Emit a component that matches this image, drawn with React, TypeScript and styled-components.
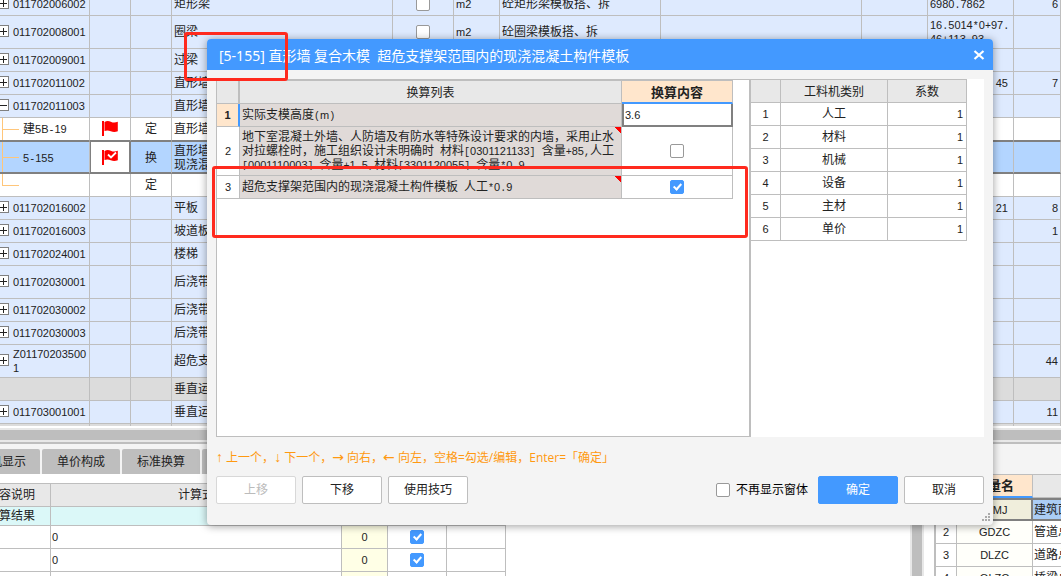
import React from 'react';
import styled, { createGlobalStyle, css } from 'styled-components';

const line = '#bebebe';
const frame = '#808080';
const blue = '#4399ff';
const gridFont = '"Noto Sans CJK SC", sans-serif';
const uiFont = '"Open Sans", "Liberation Sans", "Noto Sans CJK SC", sans-serif';

const GlobalStyle = createGlobalStyle`
  *, *::before, *::after { box-sizing: border-box; }
  html, body { margin: 0; padding: 0; overflow: hidden; background: #fff; }
  body { font-family: ${gridFont}; font-size: 12px; line-height: 14px; color: #222; }
  table { border-collapse: separate; border-spacing: 0; table-layout: fixed; }
  td, th { padding: 0 0 2px; font-weight: normal; }
  button, input { font: inherit; color: inherit; margin: 0; }
`;

/* ---------- text ---------- */

const Alnum = styled.span`
  font-family: 'Liberation Sans', sans-serif;
  font-size: 11px;
  line-height: 0;
`;

const Punct = styled.span`
  font-family: 'Liberation Mono', monospace;
  font-size: 10px;
  line-height: 0;
`;

/* Chinese stays in the grid font; Latin runs and half-width signs get narrow faces. */
function Mixed({ children }: { children: string }) {
  const parts = children.match(/\n|[A-Za-z0-9]+|[ -/:-@[-`{-~]+|[^ -~\n]+/g) ?? [];
  return (
    <>
      {parts.map((p, i) =>
        /^[A-Za-z0-9]/.test(p) ? <Alnum key={i}>{p}</Alnum> : /^[ -~]/.test(p) ? <Punct key={i}>{p}</Punct> : p,
      )}
    </>
  );
}

/* ---------- shared controls ---------- */

const Check = styled.input.attrs({ type: 'checkbox' })`
  appearance: none;
  display: block;
  position: relative;
  flex: none;
  width: 14px;
  height: 14px;
  margin: 0 auto;
  border: 1px solid #999;
  border-radius: 2px;
  background: #fff;
  td > & {
    margin-top: 2px;
  }
  &:checked {
    border-color: ${blue};
    background: ${blue};
  }
  &:checked::after {
    content: '';
    position: absolute;
    left: 4px;
    top: 1px;
    width: 5px;
    height: 8px;
    border: solid #fff;
    border-width: 0 2px 2px 0;
    transform: rotate(42deg);
  }
`;

/* ---------- bill of quantities ---------- */

const Page = styled.main`
  display: flex;
  flex-direction: column;
  height: 100vh;
  overflow: hidden;
`;

const BillPane = styled.section`
  flex: none;
  overflow: hidden;
`;

const BillTable = styled.table`
  width: 100%;
  margin-top: -7px;
`;

type Tone = 'item' | 'plain' | 'group' | 'selected';
const tones: Record<Tone, string> = { item: '#deeafe', plain: '#fff', group: '#dcdcdc', selected: '#b3d5ff' };

const BillRow = styled.tr<{ $tone: Tone; $tall?: boolean; $beforeSelected?: boolean }>`
  height: ${(p) => (p.$tall ? 33 : 23)}px;
  background: ${(p) => tones[p.$tone]};
  & > td {
    border-bottom: 1px solid ${(p) => (p.$beforeSelected ? frame : line)};
  }
  ${(p) =>
    p.$tone === 'selected' &&
    css`
      & > td {
        padding-bottom: 0;
        border-top: 1px solid ${frame};
        border-bottom: 2px solid ${frame};
      }
    `}
`;

const EdgeRow = styled.tr`
  height: 2px;
  background: #dcdcdc;
  & > td {
    padding: 0;
  }
`;

const BillCell = styled.td<{ $align?: string }>`
  padding: 0 2px 2px;
  border-right: 1px solid ${line};
  text-align: ${(p) => p.$align ?? 'left'};
  white-space: pre-wrap;
  word-break: break-all;
`;

const AmountCell = styled(BillCell)`
  padding: 0 ${(p) => (p.$align === 'right' ? 5 : 2)}px 2px 2px;
`;

const FlagCell = styled(BillCell)<{ $active?: boolean }>`
  text-align: center;
  ${(p) =>
    p.$active &&
    css`
      background: #fff;
      border-right: 2px solid ${frame};
      box-shadow: inset 1px 0 ${frame};
    `}
`;

const CodeCell = styled(BillCell)<{ $branch?: 'mid' | 'last' }>`
  padding: 0 0 2px;
  ${(p) =>
    p.$branch &&
    css`
      background-image: linear-gradient(#ffc67a, #ffc67a), linear-gradient(#ffc67a, #ffc67a);
      background-repeat: no-repeat;
      background-position: 2px 0, 2px 50%;
      background-size: 1px ${p.$branch === 'last' ? '50%' : '100%'}, 17px 1px;
    `}
`;

const CodeBox = styled.div<{ $child?: boolean }>`
  display: flex;
  align-items: center;
  gap: 4px;
  padding-left: ${(p) => (p.$child ? 23 : 0)}px;
`;

const Expander = styled.button`
  flex: none;
  display: grid;
  place-items: center;
  width: 12px;
  height: 12px;
  margin-left: -3px;
  padding: 0;
  border: 1px solid #808080;
  background: #fff;
`;

interface Item {
  code: string;
  kind?: string;
  name: string;
  tone?: Tone;
  tall?: boolean;
  open?: boolean;
  child?: 'mid' | 'last';
  flag?: 'plain' | 'checked';
  check?: boolean;
  unit?: string;
  work?: string;
  expr?: string;
  qty?: string;
  sum?: string;
}

const items: Item[] = [
  { code: '011702006002', name: '矩形梁', check: true, unit: 'm2', work: '砼矩形梁模板搭、拆', expr: '6980.7862', sum: '6' },
  { code: '011702008001', name: '圈梁', tall: true, check: true, unit: 'm2', work: '砼圈梁模板搭、拆', expr: '16.5014*0+97.\n46+113.93' },
  { code: '011702009001', name: '过梁' },
  { code: '011702011002', name: '直形墙', qty: '45', sum: '7' },
  { code: '011702011003', name: '直形墙', open: true },
  { code: '建5B-19', kind: '定', name: '直形墙', tone: 'plain', child: 'mid', flag: 'plain' },
  {
    code: '5-155',
    kind: '换',
    name: '直形墙 复合木模 超危支撑架\n现浇混凝土构件模板',
    tone: 'selected',
    tall: true,
    child: 'mid',
    flag: 'checked',
  },
  { code: '', kind: '定', name: '', tone: 'plain', child: 'last' },
  { code: '011702016002', name: '平板', qty: '21', sum: '8' },
  { code: '011702016003', name: '坡道板', sum: '1' },
  { code: '011702024001', name: '楼梯' },
  { code: '011702030001', name: '后浇带', tall: true },
  { code: '011702030002', name: '后浇带' },
  { code: '011702030003', name: '后浇带' },
  { code: 'Z011702035001', name: '超危支撑架', tall: true, sum: '44' },
  { code: '', name: '垂直运输', tone: 'group' },
  { code: '011703001001', name: '垂直运输', sum: '11' },
];

const FlagIcon = styled.svg`
  display: block;
  margin: 0 auto;
`;

function Flag({ checked }: { checked?: boolean }) {
  return (
    <FlagIcon width="16" height="17" viewBox="0 0 16 17" aria-hidden="true">
      <path d="M0 1h2v15H0z" fill="#f00" />
      <path d="M2.500 2q3-2 6.300-.3t7 .1v9.400q-3.700 1.500-7 0T2.500 11z" fill="#f00" />
      {checked && <path d="M6 5.500l3 3 5-5" fill="none" stroke="#fff" strokeWidth="1.800" />}
    </FlagIcon>
  );
}

function Bill() {
  return (
    <BillPane>
      <BillTable>
        <colgroup>
          {[90, 41, 41, 221, 61, 46, 161, 201, 66, 86].map((w, i) => (
            <col key={i} width={w} />
          ))}
          <col />
        </colgroup>
        <tbody>
          {items.map((it, i) => (
            <BillRow key={i} $tone={it.tone ?? 'item'} $tall={it.tall} $beforeSelected={items[i + 1]?.tone === 'selected'}>
              <CodeCell $branch={it.child}>
                <CodeBox $child={!!it.child}>
                  {!it.child && it.tone !== 'group' && (
                    <Expander aria-label={it.open ? '收起' : '展开'}>
                      <svg width="10" height="10" viewBox="0 0 10 10" stroke="#222" fill="none">
                        <path d={it.open ? 'M2 5.500h7' : 'M2 5.500h7M5.500 2v7'} />
                      </svg>
                    </Expander>
                  )}
                  <span>
                    <Mixed>{it.code}</Mixed>
                  </span>
                </CodeBox>
              </CodeCell>
              <FlagCell $active={it.tone === 'selected'}>{it.flag && <Flag checked={it.flag === 'checked'} />}</FlagCell>
              <BillCell $align="center">{it.kind}</BillCell>
              <BillCell>
                <Mixed>{it.name}</Mixed>
              </BillCell>
              <BillCell>{it.check && <Check aria-label={it.name} />}</BillCell>
              <BillCell>
                <Mixed>{it.unit ?? ''}</Mixed>
              </BillCell>
              <BillCell>{it.work}</BillCell>
              <BillCell />
              <BillCell />
              <AmountCell $align={it.expr ? 'left' : 'right'}>
                <Mixed>{it.expr ?? it.qty ?? ''}</Mixed>
              </AmountCell>
              <BillCell $align="right">
                <Mixed>{it.sum ?? ''}</Mixed>
              </BillCell>
            </BillRow>
          ))}
          <EdgeRow>
            {Array.from({ length: 11 }, (_, i) => (
              <BillCell key={i} />
            ))}
          </EdgeRow>
        </tbody>
      </BillTable>
    </BillPane>
  );
}

const ScrollTrack = styled.div`
  flex: none;
  height: 14px;
  margin-top: 2px;
  border: solid #e8e8e8;
  border-width: 2px 0;
  background: ${line};
`;

/* ---------- lower panes ---------- */

const TabBar = styled.div`
  flex: none;
  display: flex;
  gap: 2px;
  padding-top: 5px;
  border-top: 2px solid ${line};
  background: #f4f4f4;
`;

const Tab = styled.button<{ $cut?: boolean }>`
  flex: none;
  width: ${(p) => (p.$cut ? 88 : 78)}px;
  height: 25px;
  margin-left: ${(p) => (p.$cut ? -48 : 0)}px;
  padding: 0;
  border: 0;
  border-radius: 2px 2px 0 0;
  background: ${line};
  font-family: ${uiFont};
`;

const Lower = styled.div`
  flex: 1;
  display: flex;
  min-height: 0;
  overflow: hidden;
`;

const FormulaPane = styled.section`
  flex: 1;
  padding-top: 9px;
  overflow: hidden;
`;

const FormulaTable = styled.table`
  width: 534px;
  margin-left: -28px;
  border-top: 1px solid ${line};
`;

const FormulaRow = styled.tr<{ $kind?: 'head' | 'total' }>`
  height: ${(p) => (p.$kind === 'total' ? 19 : 23)}px;
  background: ${(p) => (p.$kind === 'head' ? '#e8e8e8' : p.$kind === 'total' ? '#dbf8f8' : '#fff')};
`;

const FormulaCell = styled.td<{ $align?: string; $tint?: boolean }>`
  padding: 0 1px 2px;
  border: solid ${line};
  border-width: 0 1px 1px 0;
  text-align: ${(p) => p.$align ?? 'left'};
  background: ${(p) => (p.$tint ? '#ffffe6' : 'transparent')};
`;

const Splitter = styled.div`
  flex: none;
  width: 14px;
  border: solid #e8e8e8;
  border-width: 0 2px;
  background: ${line};
`;

const VariablePane = styled.section`
  flex: none;
  width: 127px;
  margin-left: 10px;
  border-left: 2px solid ${line};
  overflow: hidden;
`;

const VariableTable = styled.table`
  width: 200px;
  border-top: 1px solid ${line};
`;

const VariableRow = styled.tr`
  height: 23px;
`;

const VariableHead = styled.th<{ $current?: boolean }>`
  border-right: 1px solid ${line};
  border-bottom: ${(p) => (p.$current ? `2px solid ${blue}` : `1px solid ${line}`)};
  background: ${(p) => (p.$current ? '#ffe6cc' : '#e8e8e8')};
  font-size: 13px;
  font-weight: ${(p) => (p.$current ? 'bold' : 'normal')};
`;

const VariableCell = styled.td<{ $align?: string; $bg?: string; $current?: boolean }>`
  padding: 0 1px 2px;
  border: solid ${line};
  border-width: 0 1px 1px 0;
  text-align: ${(p) => p.$align ?? 'center'};
  background: ${(p) => p.$bg ?? '#fff'};
  ${(p) =>
    p.$current &&
    css`
      border: 2px solid ${frame};
      border-left-width: 0;
    `}
`;

const variables = [
  ['1', 'JZMJ', '建筑面积'],
  ['2', 'GDZC', '管道总长'],
  ['3', 'DLZC', '道路总长'],
  ['4', 'QLZC', '桥梁总长'],
];

function LowerPanes() {
  return (
    <>
      <TabBar>
        <Tab $cut>工料机显示</Tab>
        <Tab>单价构成</Tab>
        <Tab>标准换算</Tab>
        <Tab>换算信息</Tab>
      </TabBar>
      <Lower>
        <FormulaPane>
          <FormulaTable>
            <colgroup>
              {[79, 291, 46, 59, 59].map((w, i) => (
                <col key={i} width={w} />
              ))}
            </colgroup>
            <tbody>
              <FormulaRow $kind="head">
                <FormulaCell as="th" $align="center">内容说明</FormulaCell>
                <FormulaCell as="th" $align="center">计算式</FormulaCell>
                <FormulaCell as="th" />
                <FormulaCell as="th" />
                <FormulaCell as="th" />
              </FormulaRow>
              <FormulaRow $kind="total">
                <FormulaCell $align="center">计算结果</FormulaCell>
                <FormulaCell />
                <FormulaCell />
                <FormulaCell />
                <FormulaCell />
              </FormulaRow>
              {[1, 2, 3].map((n) => (
                <FormulaRow key={n}>
                  <FormulaCell />
                  <FormulaCell>{n < 3 && <Mixed>0</Mixed>}</FormulaCell>
                  <FormulaCell $align="center" $tint>{n < 3 && <Mixed>0</Mixed>}</FormulaCell>
                  <FormulaCell>{n < 3 && <Check defaultChecked aria-label="累加" />}</FormulaCell>
                  <FormulaCell />
                </FormulaRow>
              ))}
            </tbody>
          </FormulaTable>
        </FormulaPane>
        <Splitter />
        <VariablePane>
          <VariableTable>
            <colgroup>
              <col width={21} />
              <col width={76} />
              <col />
            </colgroup>
            <tbody>
              <VariableRow>
                <VariableHead />
                <VariableHead $current>变量名</VariableHead>
                <VariableHead />
              </VariableRow>
              {variables.map(([no, code, label], i) => (
                <VariableRow key={no}>
                  <VariableCell>
                    <Mixed>{no}</Mixed>
                  </VariableCell>
                  <VariableCell $bg={i === 0 ? '#f0eedc' : '#fffffa'} $current={i === 0}>
                    <Mixed>{code}</Mixed>
                  </VariableCell>
                  <VariableCell $align="left" $bg={i === 0 ? '#abcdf5' : '#fff'} $current={i === 0}>
                    {label}
                  </VariableCell>
                </VariableRow>
              ))}
            </tbody>
          </VariableTable>
        </VariablePane>
      </Lower>
    </>
  );
}

/* ---------- dialog ---------- */

const Dialog = styled.section`
  position: absolute;
  top: 39px;
  left: 207px;
  right: 68px;
  border-radius: 4px;
  background: #f4f4f4;
  box-shadow: 0 1px 9px rgba(0, 0, 0, 0.4);
  overflow: hidden;
`;

const TitleBar = styled.header`
  display: flex;
  align-items: center;
  justify-content: space-between;
  height: 31px;
  padding: 0 8px 0 12px;
  background: ${blue};
  color: #fff;
`;

const Title = styled.h1`
  margin: 0;
  padding-top: 2px;
  font-family: 'Noto Sans', 'Noto Sans CJK SC', sans-serif;
  font-size: 14px;
  font-weight: normal;
  line-height: 20px;
  white-space: pre;
`;

const CloseButton = styled.button`
  display: grid;
  width: 12px;
  height: 12px;
  padding: 0;
  border: 0;
  background: none;
`;

const DialogBody = styled.div`
  display: flex;
  height: 358px;
  margin: 9px 9px 0;
`;

const ConversionPane = styled.div`
  flex: 1;
  border: solid ${line};
  border-width: 1px 2px 1px 1px;
  background: #fff;
`;

const CategoryPane = styled.div`
  flex: none;
  width: 233px;
  background: #fff;
`;

const ConversionTable = styled.table`
  width: 516px;
  border-top: 1px solid ${line};
`;

const CategoryTable = styled.table`
  width: 216px;
  border-top: 1px solid ${line};
`;

const DialogRow = styled.tr<{ $tall?: boolean }>`
  height: ${(p) => (p.$tall ? 49 : 23)}px;
`;

const HeadCell = styled.th<{ $current?: boolean; $thick?: boolean }>`
  padding: 0;
  border-right: ${(p) => (p.$thick ? 2 : 1)}px solid ${line};
  border-bottom: ${(p) => (p.$current ? `2px solid ${blue}` : `1px solid ${line}`)};
  background: ${(p) => (p.$current ? '#ffe6cc' : '#e8e8e8')};
  font-size: ${(p) => (p.$current ? 13 : 12)}px;
  font-weight: ${(p) => (p.$current ? 'bold' : 'normal')};
`;

const NumberCell = styled.td<{ $current?: boolean }>`
  border-right: ${(p) => (p.$current ? `2px solid ${blue}` : `1px solid ${line}`)};
  border-bottom: 1px solid ${line};
  text-align: center;
  background: ${(p) => (p.$current ? '#ffe6cc' : '#fff')};
  font-weight: ${(p) => (p.$current ? 'bold' : 'normal')};
`;

const RuleCell = styled.td<{ $noted?: boolean; $long?: boolean }>`
  padding: ${(p) => (p.$long ? '2px 2px 0' : '0 2px 2px')};
  border: solid ${line};
  border-width: 0 1px 1px 0;
  background-color: #e0dad8;
  vertical-align: ${(p) => (p.$long ? 'top' : 'middle')};
  white-space: pre;
  ${(p) =>
    p.$noted &&
    css`
      background-image: linear-gradient(to bottom left, #f00 50%, transparent 50%);
      background-position: top right;
      background-repeat: no-repeat;
      background-size: 7px 6px;
    `}
`;

const RuleText = styled.div`
  max-height: 41px;
  overflow: hidden;
`;

const ValueCell = styled.td<{ $align?: string }>`
  padding: 0 3px 2px;
  border: solid ${line};
  border-width: 0 1px 1px 0;
  text-align: ${(p) => p.$align ?? 'center'};
  background: #fff;
`;

const EditCell = styled.td`
  padding: 0;
  border: solid ${frame};
  border-width: 0 2px 2px;
`;

const ValueInput = styled.input`
  display: block;
  width: 100%;
  height: 20px;
  padding: 0 1px;
  border: 0;
  outline: 0;
  background: #fff;
  font-family: 'Liberation Sans', sans-serif;
  font-size: 11px;
`;

const Hint = styled.p`
  margin: 11px 9px 0;
  font-family: ${uiFont};
  line-height: 20px;
  color: #ff9910;
  white-space: pre;
`;

const Arrow = styled.span<{ $wide?: boolean }>`
  font-family: ${(p) => (p.$wide ? "'DejaVu Sans'" : "'Liberation Sans'")}, sans-serif;
  font-size: 14px;
  line-height: 0;
`;

const Footer = styled.footer`
  display: flex;
  align-items: center;
  gap: 6px;
  padding: 8px 9px 21px;
  font-family: ${uiFont};
`;

const Button = styled.button<{ $primary?: boolean }>`
  width: 80px;
  height: 28px;
  padding: 0;
  border: 1px solid ${(p) => (p.$primary ? blue : line)};
  border-radius: 2px;
  background: ${(p) => (p.$primary ? blue : '#fff')};
  color: ${(p) => (p.$primary ? '#fff' : '#222')};
  &:disabled {
    border-color: #d8d8d8;
    color: #bbb;
  }
`;

const HideLabel = styled.label`
  display: flex;
  align-items: center;
  gap: 6px;
  margin: 0 4px 0 auto;
  color: #000;
`;

const Grip = styled.svg`
  position: absolute;
  right: 3px;
  bottom: 4px;
`;

const Callout = styled.div<{ $box: [number, number, number, number] }>`
  position: absolute;
  left: ${(p) => p.$box[0]}px;
  top: ${(p) => p.$box[1]}px;
  width: ${(p) => p.$box[2]}px;
  height: ${(p) => p.$box[3]}px;
  border: 3px solid #ff2a1e;
  border-radius: 3px;
  pointer-events: none;
`;

const longRule =
  '地下室混凝土外墙、人防墙及有防水等特殊设计要求的内墙，采用止水\n' +
  '对拉螺栓时，施工组织设计未明确时 材料[0301121133] 含量+85,人工\n' +
  '[0001110003] 含量+1.5,材料[3301120055] 含量*0.9';

const categories = ['人工', '材料', '机械', '设备', '主材', '单价'];

function ConversionDialog() {
  return (
    <Dialog role="dialog" aria-labelledby="dialog-title">
      <TitleBar>
        <Title id="dialog-title">{'[5-155] 直形墙 复合木模  超危支撑架范围内的现浇混凝土构件模板'}</Title>
        <CloseButton aria-label="关闭">
          <svg width="12" height="12" viewBox="0 0 12 12" stroke="#fff" strokeWidth="2.200">
            <path d="M1.500 2l9 8M10.500 2l-9 8" />
          </svg>
        </CloseButton>
      </TitleBar>
      <DialogBody>
        <ConversionPane>
          <ConversionTable>
            <colgroup>
              <col width={23} />
              <col width={382} />
              <col width={111} />
            </colgroup>
            <tbody>
              <DialogRow>
                <HeadCell $thick />
                <HeadCell>换算列表</HeadCell>
                <HeadCell $current>换算内容</HeadCell>
              </DialogRow>
              <DialogRow>
                <NumberCell $current>
                  <Mixed>1</Mixed>
                </NumberCell>
                <RuleCell>
                  <Mixed>实际支模高度(m)</Mixed>
                </RuleCell>
                <EditCell>
                  <ValueInput defaultValue="3.6" aria-label="实际支模高度(m)" />
                </EditCell>
              </DialogRow>
              <DialogRow $tall>
                <NumberCell>
                  <Mixed>2</Mixed>
                </NumberCell>
                <RuleCell $noted $long>
                  <RuleText>
                    <Mixed>{longRule}</Mixed>
                  </RuleText>
                </RuleCell>
                <ValueCell>
                  <Check aria-label="止水对拉螺栓" />
                </ValueCell>
              </DialogRow>
              <DialogRow>
                <NumberCell>
                  <Mixed>3</Mixed>
                </NumberCell>
                <RuleCell $noted>
                  <Mixed>超危支撑架范围内的现浇混凝土构件模板 人工*0.9</Mixed>
                </RuleCell>
                <ValueCell>
                  <Check defaultChecked aria-label="超危支撑架" />
                </ValueCell>
              </DialogRow>
            </tbody>
          </ConversionTable>
        </ConversionPane>
        <CategoryPane>
          <CategoryTable>
            <colgroup>
              <col width={30} />
              <col width={107} />
              <col width={79} />
            </colgroup>
            <tbody>
              <DialogRow>
                <HeadCell />
                <HeadCell>工料机类别</HeadCell>
                <HeadCell>系数</HeadCell>
              </DialogRow>
              {categories.map((c, i) => (
                <DialogRow key={c}>
                  <ValueCell>
                    <Mixed>{String(i + 1)}</Mixed>
                  </ValueCell>
                  <ValueCell>{c}</ValueCell>
                  <ValueCell $align="right">
                    <Mixed>1</Mixed>
                  </ValueCell>
                </DialogRow>
              ))}
            </tbody>
          </CategoryTable>
        </CategoryPane>
      </DialogBody>
      <Hint>
        <Arrow>↑</Arrow> 上一个，<Arrow>↓</Arrow> 下一个，<Arrow $wide>→</Arrow> 向右，<Arrow $wide>←</Arrow>{' '}
        向左，空格=勾选/编辑，Enter=「确定」
      </Hint>
      <Footer>
        <Button disabled>上移</Button>
        <Button>下移</Button>
        <Button>使用技巧</Button>
        <HideLabel>
          <Check />
          不再显示窗体
        </HideLabel>
        <Button $primary>确定</Button>
        <Button>取消</Button>
      </Footer>
      <Grip width="8" height="8" viewBox="0 0 8 8" fill="#aaa" aria-hidden="true">
        <path d="M6 0h2v2H6zM3 3h2v2H3zM6 3h2v2H6zM0 6h2v2H0zM3 6h2v2H3zM6 6h2v2H6z" />
      </Grip>
    </Dialog>
  );
}

export default function App() {
  return (
    <Page>
      <GlobalStyle />
      <Bill />
      <ScrollTrack />
      <LowerPanes />
      <ConversionDialog />
      <Callout $box={[184, 32, 104, 49]} />
      <Callout $box={[212, 166, 536, 72]} />
    </Page>
  );
}
